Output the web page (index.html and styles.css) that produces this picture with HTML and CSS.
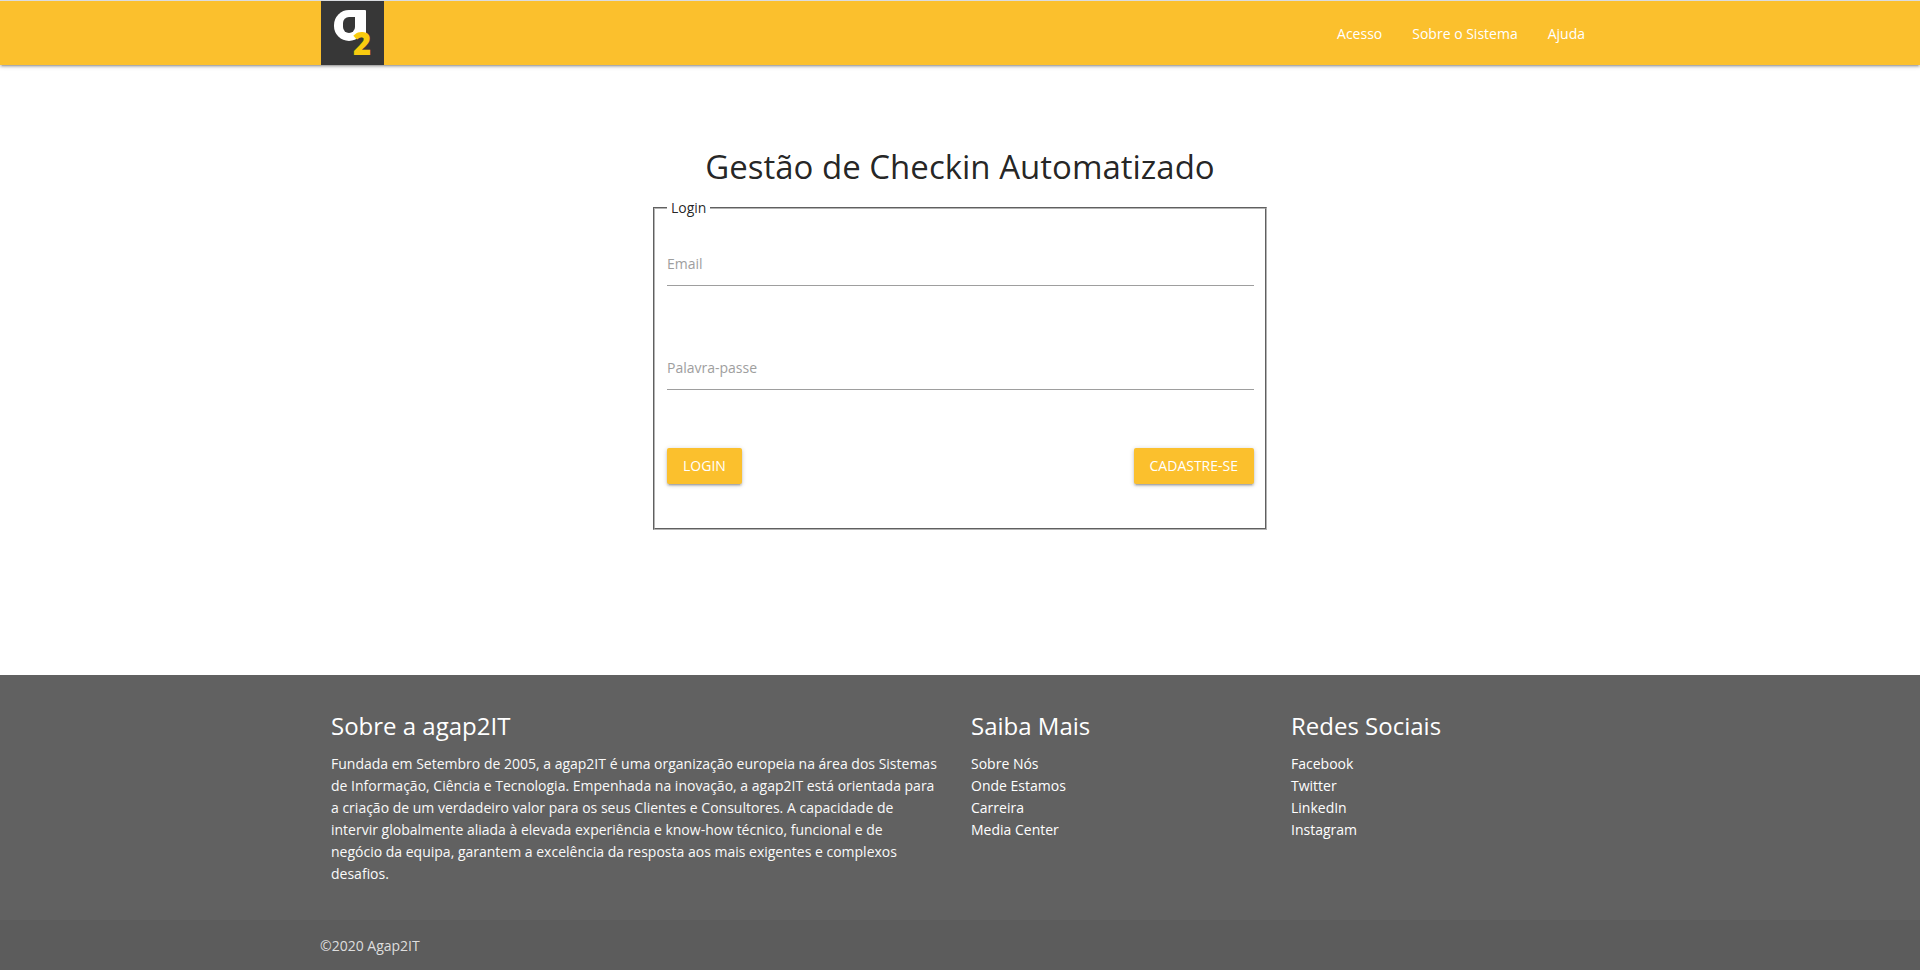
FILE: index.html
```html
<!DOCTYPE html>
<html lang="pt">
<head>
<meta charset="utf-8">
<title>Gestão de Checkin Automatizado</title>
<link rel="stylesheet" href="styles.css">
</head>
<body>
<header class="navbar">
  <div class="container navbar-inner">
    <a class="brand" href="#" aria-label="agap2IT">
      <svg class="brand-logo" viewBox="0 0 63 64" aria-hidden="true">
        <rect width="63" height="64" fill="#373737"/>
        <rect x="13" y="9" width="30" height="31" rx="15" fill="#fff"/>
        <rect x="28" y="9" width="17" height="25" rx="1" fill="#fff"/>
        <rect x="22" y="16" width="12" height="16" rx="6" fill="#373737"/>
        <rect x="28" y="16" width="6" height="9" fill="#373737"/>
        <text class="brand-digit" x="32" y="54">2</text>
      </svg>
    </a>
    <nav class="menu">
      <a href="#">Acesso</a>
      <a href="#">Sobre o Sistema</a>
      <a href="#">Ajuda</a>
    </nav>
  </div>
</header>
<main class="main">
  <form class="login">
    <h1 class="title">Gestão de Checkin Automatizado</h1>
    <fieldset class="panel">
      <legend>Login</legend>
      <div class="field">
        <label for="email">Email</label>
        <input id="email" type="email">
      </div>
      <div class="field">
        <label for="password">Palavra-passe</label>
        <input id="password" type="password">
      </div>
      <div class="actions">
        <button class="btn" type="submit">Login</button>
        <button class="btn" type="button">Cadastre-se</button>
      </div>
    </fieldset>
  </form>
</main>
<footer class="footer">
  <div class="container footer-grid">
    <section>
      <h2>Sobre a agap2IT</h2>
      <p>Fundada em Setembro de 2005, a agap2IT é uma organização europeia na área dos Sistemas de Informação, Ciência e Tecnologia. Empenhada na inovação, a agap2IT está orientada para a criação de um verdadeiro valor para os seus Clientes e Consultores. A capacidade de intervir globalmente aliada à elevada experiência e know-how técnico, funcional e de<br>negócio da equipa, garantem a excelência da resposta aos mais exigentes e complexos desafios.</p>
    </section>
    <section>
      <h2>Saiba Mais</h2>
      <ul>
        <li><a href="#">Sobre Nós</a></li>
        <li><a href="#">Onde Estamos</a></li>
        <li><a href="#">Carreira</a></li>
        <li><a href="#">Media Center</a></li>
      </ul>
    </section>
    <section>
      <h2>Redes Sociais</h2>
      <ul>
        <li><a href="#">Facebook</a></li>
        <li><a href="#">Twitter</a></li>
        <li><a href="#">LinkedIn</a></li>
        <li><a href="#">Instagram</a></li>
      </ul>
    </section>
  </div>
  <div class="copyright">
    <div class="container">©2020 Agap2IT</div>
  </div>
</footer>
</body>
</html>
```
FILE: styles.css
```css
* {
  box-sizing: border-box;
}

body {
  margin: 0;
  min-height: 100vh;
  display: flex;
  flex-direction: column;
  background: #fff;
  color: rgba(0, 0, 0, 0.87);
  font-family: "Open Sans", "Noto Sans", sans-serif;
  font-size: 14px;
  line-height: 22px;
}

a {
  color: inherit;
  text-decoration: none;
}

.container {
  width: 90%;
  max-width: 1280px;
  margin: 0 auto;
}

.navbar {
  background: #fbc02d;
  border-top: 1px solid #dadce0;
  color: #fff;
  box-shadow: 0 2px 2px 0 rgba(0, 0, 0, 0.14), 0 3px 1px -2px rgba(0, 0, 0, 0.12), 0 1px 5px 0 rgba(0, 0, 0, 0.2);
}

.navbar-inner {
  display: flex;
  justify-content: space-between;
  height: 64px;
}

.brand {
  display: block;
  padding-left: 1px;
}

.brand-logo {
  display: block;
  height: 64px;
}

.brand-digit {
  fill: #f9cb0f;
  font-size: 31px;
  font-weight: 800;
}

.menu {
  display: flex;
  align-items: center;
  padding-top: 2px;
}

.menu a {
  padding: 0 15px;
}

.main {
  flex: 1;
  padding: 72px 16px;
}

.login {
  max-width: 614px;
  margin: 0 auto;
}

.title {
  margin: 0;
  font-size: 33px;
  font-weight: 400;
  line-height: 60px;
  text-align: center;
}

.panel {
  margin: 0;
  padding: 3px 11px 44px 12px;
  border: 2px groove #b4b4b4;
}

.panel legend {
  padding: 0 4px;
}

.field {
  display: grid;
  height: 46px;
  margin: 18px 0 58px;
}

.field label,
.field input {
  grid-area: 1 / 1;
}

.field label {
  padding-top: 13px;
  color: #9e9e9e;
  pointer-events: none;
}

.field input {
  width: 100%;
  border: 0;
  border-bottom: 1px solid #9e9e9e;
  outline: 0;
  background: transparent;
  font: inherit;
}

.actions {
  display: flex;
  justify-content: space-between;
}

.btn {
  height: 36px;
  padding: 0 16px;
  border: 0;
  border-radius: 2px;
  background: #fbc02d;
  color: #fff;
  font: inherit;
  text-transform: uppercase;
  cursor: pointer;
  box-shadow: 0 2px 2px 0 rgba(0, 0, 0, 0.14), 0 3px 1px -2px rgba(0, 0, 0, 0.12), 0 1px 5px 0 rgba(0, 0, 0, 0.2);
}

.footer {
  background: #616161;
  color: #fff;
}

.footer-grid {
  display: grid;
  grid-template-columns: 2fr 1fr 1fr;
  padding: 35px 0;
}

.footer-grid section {
  padding: 0 11px;
}

.footer h2 {
  margin: 0 0 11px;
  font-size: 24px;
  font-weight: 400;
  line-height: 32px;
}

.footer p {
  margin: 0;
  padding-right: 10px;
  color: #fafafa;
}

.footer ul {
  margin: 0;
  padding: 0;
  list-style: none;
}

.copyright {
  padding: 15px 0 13px;
  background: #5c5c5c;
  color: #dedede;
}
```
